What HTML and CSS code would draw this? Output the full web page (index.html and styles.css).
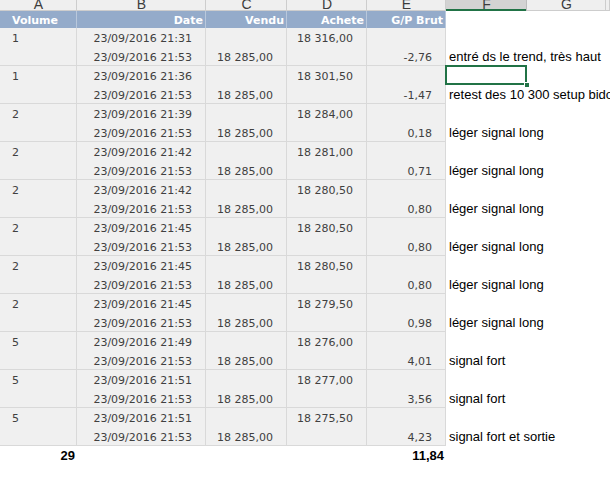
FILE: index.html
```html
<!DOCTYPE html>
<html lang="fr">
<head>
    <meta charset="UTF-8">
    <title>Trades 23/09/2016</title>
    <link rel="stylesheet" href="styles.css">
</head>
<body>

<div class="sheet">
    <div class="cols letters">
        <div class="lt">A</div>
        <div class="lt">B</div>
        <div class="lt">C</div>
        <div class="lt">D</div>
        <div class="lt">E</div>
        <div class="lt active">F</div>
        <div class="lt">G</div>
        <div class="lt"></div>
    </div>

    <div class="cols head">
        <div class="hc left">Volume</div>
        <div class="hc">Date</div>
        <div class="hc">Vendu</div>
        <div class="hc">Achete</div>
        <div class="hc">G/P Brut</div>
        <div></div>
    </div>

    <div id="rows"></div>

    <div class="cols total">
        <div class="tc">29</div>
        <div></div>
        <div></div>
        <div></div>
        <div class="tc">11,84</div>
        <div></div>
    </div>

    <div class="sel"><span class="handle"></span></div>
</div>

<script>
    // volume, heure achat, achete, gp, commentaire
    const trades = [
        ['1', '21:31', '18 316,00', '-2,76', 'entré ds le trend, très haut'],
        ['1', '21:36', '18 301,50', '-1,47', 'retest des 10 300 setup bidon'],
        ['2', '21:39', '18 284,00', '0,18', 'léger signal long'],
        ['2', '21:42', '18 281,00', '0,71', 'léger signal long'],
        ['2', '21:42', '18 280,50', '0,80', 'léger signal long'],
        ['2', '21:45', '18 280,50', '0,80', 'léger signal long'],
        ['2', '21:45', '18 280,50', '0,80', 'léger signal long'],
        ['2', '21:45', '18 279,50', '0,98', 'léger signal long'],
        ['5', '21:49', '18 276,00', '4,01', 'signal fort'],
        ['5', '21:51', '18 277,00', '3,56', 'signal fort'],
        ['5', '21:51', '18 275,50', '4,23', 'signal fort et sortie']
    ];

    const cell = (a, b, cls) => `<div class="${cls}"><div class="ln">${a}</div><div class="ln">${b}</div></div>`;

    document.getElementById('rows').innerHTML = trades.map(t => `
        <div class="cols group">
            ${cell(t[0], '', 'dc left')}
            ${cell('23/09/2016 ' + t[1], '23/09/2016 21:53', 'dc')}
            ${cell('', '18 285,00', 'dc')}
            ${cell(t[2], '', 'dc')}
            ${cell('', t[3], 'dc')}
            ${cell('', t[4], 'note')}
        </div>
    `).join('');
</script>

</body>
</html>
```

FILE: styles.css
```css
* {
    box-sizing: border-box;
    margin: 0;
    padding: 0;
}
body {
    background-color: #fff;
    overflow: hidden;
    font-family: 'DejaVu Sans', Verdana, sans-serif;
}

.sheet {
    position: relative;
    width: 610px;
}
.cols {
    display: grid;
    grid-template-columns: 77px 129px 81px 80px 79px 81px 79px 1fr;
}

/* Column letters */
.letters {
    height: 11px;
    overflow: hidden;
    background-color: #efefef;
}
.lt {
    font-family: 'Liberation Sans', Arial, sans-serif;
    font-size: 14px;
    line-height: 9px;
    color: #3c3c3c;
    text-align: center;
    box-shadow: inset -1px -1px 0 #cdcdcd;
}
.lt.active {
    background-color: #d3d3d3;
    box-shadow: inset -1px 0 0 #bdbdbd, inset 0 -2px 0 #217346;
}

/* Table header */
.head {
    height: 17px;
}
.hc {
    background-color: #94abca;
    color: #fff;
    font-weight: bold;
    font-size: 11px;
    line-height: 17px;
    padding-top: 1px;
    text-align: right;
    padding-right: 3px;
    box-shadow: inset -1px 0 0 rgba(255, 255, 255, 0.35);
}
.hc.left {
    text-align: left;
    padding-left: 12px;
}

/* Data */
.group {
    height: 38px;
}
.dc {
    background-color: #f0f0f0;
    color: #404040;
    font-size: 11px;
    text-align: right;
    padding-right: 14px;
    box-shadow: inset -1px -1px 0 #d9d9d9;
}
.dc.left {
    text-align: left;
    padding-left: 12px;
}
.ln {
    height: 19px;
    line-height: 18px;
    padding-top: 2px;
    white-space: nowrap;
}
.note {
    grid-column: 6 / 9;
    font-family: 'Liberation Sans', Arial, sans-serif;
    font-size: 13px;
    color: #000;
    padding-left: 3px;
}
.note .ln {
    padding-top: 1px;
}

/* Totals */
.total {
    height: 19px;
    font-family: 'Liberation Sans', Arial, sans-serif;
    font-size: 13px;
    font-weight: bold;
    line-height: 19px;
}
.tc {
    text-align: right;
    padding-right: 2px;
}

/* Selected cell F */
.sel {
    position: absolute;
    left: 445px;
    top: 65px;
    width: 82px;
    height: 20px;
    border: 2px solid #217346;
}
.handle {
    position: absolute;
    right: -5px;
    bottom: -5px;
    width: 6px;
    height: 6px;
    background-color: #217346;
    border: 1px solid #fff;
}
```
